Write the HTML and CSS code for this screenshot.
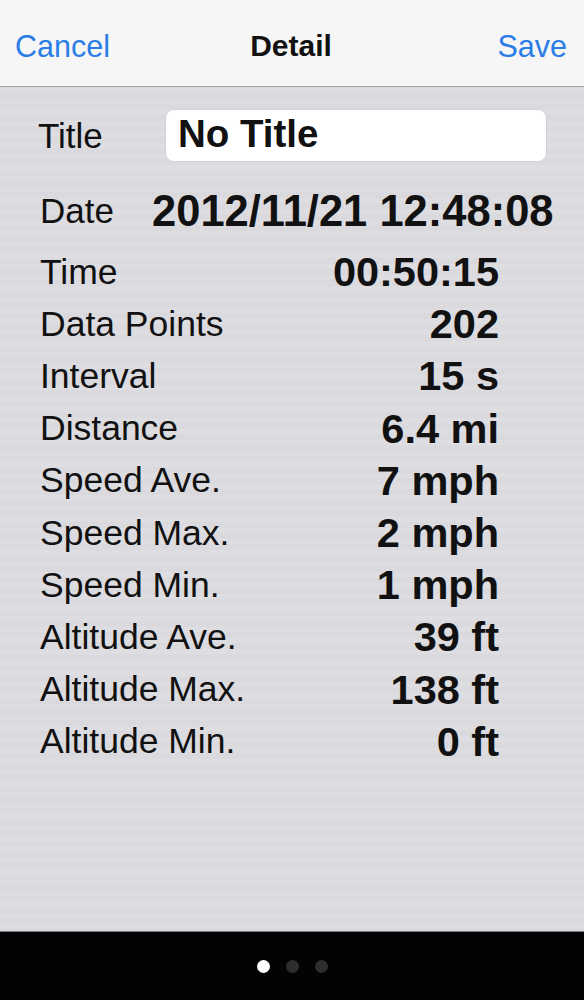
FILE: index.html
```html
<!DOCTYPE html>
<html lang="en">
<head>
  <meta charset="UTF-8" />
  <meta name="viewport" content="width=device-width, initial-scale=1.0" />
  <title>Detail</title>
  <link rel="stylesheet" href="styles.css">
</head>
<body>
  <header class="navbar">
    <a class="nav-btn cancel" href="#">Cancel</a>
    <h1>Detail</h1>
    <a class="nav-btn save" href="#">Save</a>
  </header>

  <main class="content">
    <div class="title-row">
      <label for="title">Title</label>
      <input type="text" id="title" value="No Title" />
    </div>

    <div class="date-row">
      <span class="label">Date</span>
      <span class="date-value">2012/11/21 12:48:08</span>
    </div>

    <ul class="stats">
      <li><span class="label">Time</span><span class="value">00:50:15</span></li>
      <li><span class="label">Data Points</span><span class="value">202</span></li>
      <li><span class="label">Interval</span><span class="value">15 s</span></li>
      <li><span class="label">Distance</span><span class="value">6.4 mi</span></li>
      <li><span class="label">Speed Ave.</span><span class="value">7 mph</span></li>
      <li><span class="label">Speed Max.</span><span class="value">2 mph</span></li>
      <li><span class="label">Speed Min.</span><span class="value">1 mph</span></li>
      <li><span class="label">Altitude Ave.</span><span class="value">39 ft</span></li>
      <li><span class="label">Altitude Max.</span><span class="value">138 ft</span></li>
      <li><span class="label">Altitude Min.</span><span class="value">0 ft</span></li>
    </ul>
  </main>

  <footer class="pager">
    <span class="dot active"></span>
    <span class="dot"></span>
    <span class="dot"></span>
  </footer>
</body>
</html>
```

FILE: styles.css
```css
html, body {
  height: 100%;
}

body {
  margin: 0;
  display: flex;
  flex-direction: column;
  font-family: 'Liberation Sans', Arial, sans-serif;
  color: #111;
  background: #dcdbdf;
  background-image: repeating-linear-gradient(180deg,
    rgba(255, 255, 255, 0.05) 0, rgba(255, 255, 255, 0.05) 5px,
    rgba(0, 0, 0, 0.006) 5px, rgba(0, 0, 0, 0.006) 11px);
}

.navbar {
  height: 87px;
  flex: none;
  display: grid;
  grid-template-columns: 1fr auto 1fr;
  align-items: center;
  padding: 6px 17px 0 15px;
  box-sizing: border-box;
  background: #f6f6f7;
  border-bottom: 1px solid #a8a8ab;
}

.navbar h1 {
  margin: 0;
  font-size: 30px;
  font-weight: bold;
  color: #111;
}

.nav-btn {
  font-size: 30.5px;
  color: #2a7de6;
  text-decoration: none;
}

.save {
  justify-self: end;
}

.content {
  flex: 1;
  padding: 22px 28px 0 38px;
}

.title-row {
  display: flex;
  align-items: center;
  height: 53px;
}

.title-row label {
  width: 127px;
  font-size: 35px;
}

.title-row input {
  width: 382px;
  height: 53px;
  box-sizing: border-box;
  margin: 0;
  padding: 0 12px 4px;
  border: 1px solid #d2d2d4;
  border-radius: 9px;
  background: #fff;
  font-family: inherit;
  font-size: 38.5px;
  font-weight: bold;
  color: #111;
}

.date-row {
  display: flex;
  align-items: center;
  height: 52px;
  margin-top: 23px;
  padding-left: 2px;
  white-space: nowrap;
}

.date-row .label {
  flex: none;
  width: 112px;
  font-size: 35px;
}

.date-value {
  font-size: 43.5px;
  font-weight: bold;
}

.stats {
  list-style: none;
  margin: 9px 0 0;
  padding: 0 57px 0 2px;
}

.stats li {
  display: flex;
  align-items: center;
  justify-content: space-between;
  height: 52.2px;
}

.stats .label {
  font-size: 35.5px;
}

.stats .value {
  font-size: 41.5px;
  font-weight: bold;
}

.pager {
  height: 68px;
  flex: none;
  display: flex;
  align-items: center;
  justify-content: center;
  gap: 16px;
  background: #030204;
  border-top: 1px solid #7a7a7c;
}

.dot {
  width: 13px;
  height: 13px;
  border-radius: 50%;
  background: #2e2e30;
}

.dot.active {
  background: #fff;
}
```
